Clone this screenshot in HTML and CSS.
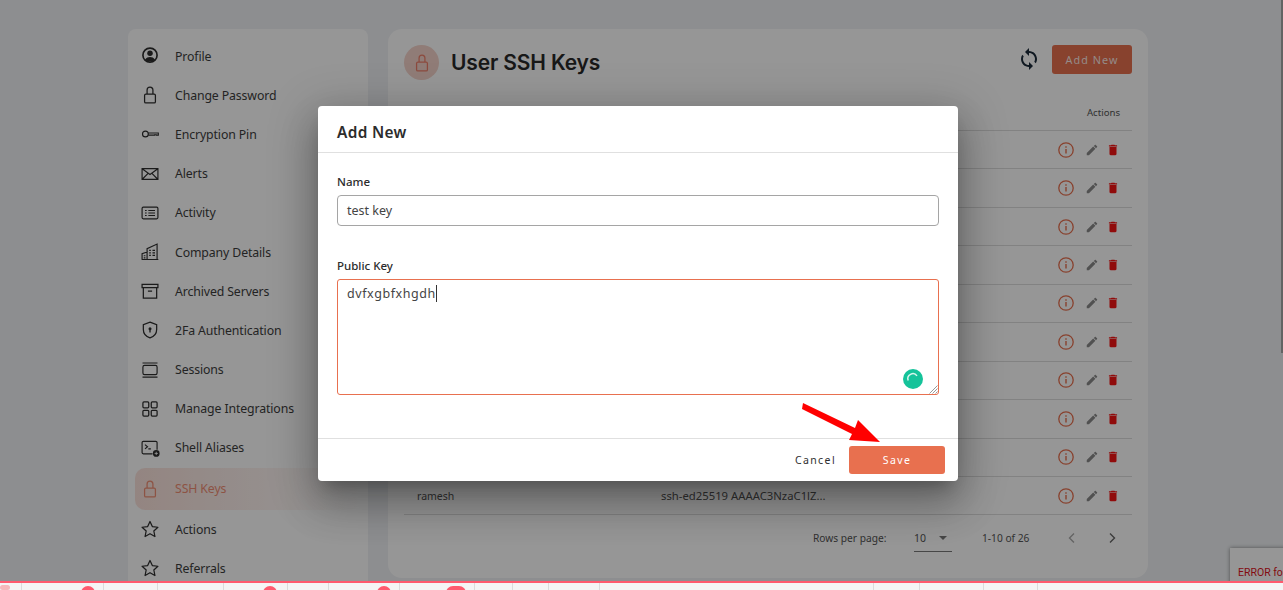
FILE: index.html
```html
<!DOCTYPE html>
<html lang="en">
<head>
<meta charset="utf-8">
<title>User SSH Keys</title>
<link rel="stylesheet" href="styles.css">
</head>
<body>
<svg class="sprite" aria-hidden="true">
  <symbol id="i-lock" viewBox="0 0 24 24"><path d="M7 11h10a1.500 1.500 0 0 1 1.500 1.500v7.500a1.500 1.500 0 0 1-1.500 1.500H7A1.500 1.500 0 0 1 5.500 20v-7.500A1.500 1.500 0 0 1 7 11zM8.500 11V6a3.500 3.500 0 0 1 7 0v5" fill="none" stroke="currentColor" stroke-width="1.500"/></symbol>
  <symbol id="i-info" viewBox="0 0 16 16"><circle cx="8" cy="8" r="7.200" fill="none" stroke="currentColor" stroke-width="1.300"/><path d="M7.300 7h1.400v4.500H7.300zM7.300 4.200h1.400v1.500H7.300z" fill="currentColor"/></symbol>
  <symbol id="i-edit" viewBox="0 0 24 24"><path fill="currentColor" d="M3 17.250V21h3.750L17.810 9.940l-3.750-3.750L3 17.250zM20.710 7.040c.39-.39.39-1.020 0-1.410l-2.340-2.340c-.39-.39-1.020-.39-1.410 0l-1.830 1.830 3.750 3.750 1.830-1.830z"/></symbol>
  <symbol id="i-trash" viewBox="0 0 24 24"><path fill="currentColor" d="M6 19c0 1.100.9 2 2 2h8c1.100 0 2-.9 2-2V7H6v12zM19 4h-3.500l-1-1h-5l-1 1H5v2h14V4z"/></symbol>
  <symbol id="i-star" viewBox="0 0 24 24"><path d="M12 3l2.800 6.100 6.700.8-4.900 4.500 1.300 6.600L12 17.700 6.100 21l1.300-6.600L2.500 9.900l6.700-.8z" fill="none" stroke="currentColor" stroke-width="1.500" stroke-linejoin="round"/></symbol>
</svg>

<div class="app">
  <div class="content">
    <nav class="sidebar">
      <a class="nav-item"><svg class="nav-icon" viewBox="0 0 24 24"><circle cx="12" cy="11" r="8.500" fill="none" stroke="currentColor" stroke-width="2"/><circle cx="12" cy="8.800" r="3.300" fill="currentColor"/><path d="M6 16.500c1.500-2.500 3.700-3.300 6-3.300s4.500.8 6 3.300a8.500 8.500 0 0 1-12 0z" fill="currentColor"/></svg><span>Profile</span></a>
      <a class="nav-item"><svg class="nav-icon"><use href="#i-lock"/></svg><span>Change Password</span></a>
      <a class="nav-item"><svg class="nav-icon" viewBox="0 0 24 24"><circle cx="6.500" cy="12" r="3.500" fill="none" stroke="currentColor" stroke-width="1.400"/><path d="M10 10.700h12v2.600h-2.500v-.5h-2v.5H10" fill="none" stroke="currentColor" stroke-width="1.300"/></svg><span>Encryption Pin</span></a>
      <a class="nav-item"><svg class="nav-icon" viewBox="0 0 24 24"><path d="M2.500 5.500h19v13h-19zM3 6l9 6.500L21 6M3 18l7-7M21 18l-7-7" fill="none" stroke="currentColor" stroke-width="1.400"/></svg><span>Alerts</span></a>
      <a class="nav-item"><svg class="nav-icon" viewBox="0 0 24 24"><rect x="2.500" y="5" width="19" height="14" rx="1.500" fill="none" stroke="currentColor" stroke-width="1.400"/><path d="M6 9h2M10 9h8M6 12h2M10 12h8M6 15h2M10 15h8" stroke="currentColor" stroke-width="1.300"/></svg><span>Activity</span></a>
      <a class="nav-item"><svg class="nav-icon" viewBox="0 0 24 24"><path d="M2.500 21v-7l6-2V21M8.500 21V8l12-5.500V21zM2 21h20M11 10h2M15 10h3M11 13h2M15 13h3M11 16h2M15 16h3M4.500 16.500h2M4.500 19h2" fill="none" stroke="currentColor" stroke-width="1.400"/></svg><span>Company Details</span></a>
      <a class="nav-item"><svg class="nav-icon" viewBox="0 0 24 24"><path d="M2.500 4h19v4h-19zM4 8v12.500h16V8M9.500 12h5" fill="none" stroke="currentColor" stroke-width="1.500"/></svg><span>Archived Servers</span></a>
      <a class="nav-item"><svg class="nav-icon" viewBox="0 0 24 24"><path d="M12 2.500l8 3v6c0 5-3.500 8.500-8 10-4.500-1.500-8-5-8-10v-6z" fill="none" stroke="currentColor" stroke-width="1.500"/><circle cx="12" cy="10.500" r="1.800" fill="currentColor"/><path d="M11.200 11h1.600v4h-1.600z" fill="currentColor"/></svg><span>2Fa Authentication</span></a>
      <a class="nav-item"><svg class="nav-icon" viewBox="0 0 24 24"><rect x="3.500" y="6.500" width="17" height="11" rx="2" fill="none" stroke="currentColor" stroke-width="1.400"/><path d="M3 3.500h18M3 20.500h18" stroke="currentColor" stroke-width="1.300"/></svg><span>Sessions</span></a>
      <a class="nav-item"><svg class="nav-icon" viewBox="0 0 24 24"><rect x="3.500" y="3.500" width="7" height="7" rx="1.200" fill="none" stroke="currentColor" stroke-width="1.500"/><rect x="13.500" y="3.500" width="7" height="7" rx="1.200" fill="none" stroke="currentColor" stroke-width="1.500"/><rect x="3.500" y="13.500" width="7" height="7" rx="1.200" fill="none" stroke="currentColor" stroke-width="1.500"/><rect x="13.500" y="13.500" width="7" height="7" rx="1.200" fill="none" stroke="currentColor" stroke-width="1.500"/></svg><span>Manage Integrations</span></a>
      <a class="nav-item"><svg class="nav-icon" viewBox="0 0 24 24"><path d="M15 19H4a1.500 1.500 0 0 1-1.500-1.500v-12A1.500 1.500 0 0 1 4 4h15a1.500 1.500 0 0 1 1.500 1.500V14M6 8l3 2.500L6 13M10 13h3" fill="none" stroke="currentColor" stroke-width="1.400"/><circle cx="19.500" cy="18.500" r="4" fill="currentColor"/><path d="M19.500 16.500v4M17.500 18.500h4" stroke="#fff" stroke-width="1"/></svg><span>Shell Aliases</span></a>
      <a class="nav-item active"><svg class="nav-icon"><use href="#i-lock"/></svg><span>SSH Keys</span></a>
      <a class="nav-item"><svg class="nav-icon"><use href="#i-star"/></svg><span>Actions</span></a>
      <a class="nav-item"><svg class="nav-icon"><use href="#i-star"/></svg><span>Referrals</span></a>
    </nav>

    <main class="panel">
      <header class="panel-head">
        <span class="avatar"><svg class="avatar-icon"><use href="#i-lock"/></svg></span>
        <h1 class="panel-title">User SSH Keys</h1>
        <svg class="sync" viewBox="0 0 24 24"><path fill="currentColor" d="M12 4V1L8 5l4 4V6c3.310 0 6 2.690 6 6 0 1.010-.25 1.970-.7 2.800l1.460 1.460C19.540 15.030 20 13.570 20 12c0-4.420-3.580-8-8-8zm0 14c-3.310 0-6-2.690-6-6 0-1.010.25-1.970.7-2.800L5.240 7.740C4.460 8.970 4 10.430 4 12c0 4.420 3.580 8 8 8v3l4-4-4-4v3z"/></svg>
        <button class="btn-add">Add New</button>
      </header>

      <div class="table">
        <div class="thead"><span>Name</span><span>Public Key</span><span class="th-actions">Actions</span></div>
        <div class="row"><span></span><span></span><span class="actions"><svg class="a-info"><use href="#i-info"/></svg><svg class="a-edit"><use href="#i-edit"/></svg><svg class="a-trash"><use href="#i-trash"/></svg></span></div>
        <div class="row"><span></span><span></span><span class="actions"><svg class="a-info"><use href="#i-info"/></svg><svg class="a-edit"><use href="#i-edit"/></svg><svg class="a-trash"><use href="#i-trash"/></svg></span></div>
        <div class="row"><span></span><span></span><span class="actions"><svg class="a-info"><use href="#i-info"/></svg><svg class="a-edit"><use href="#i-edit"/></svg><svg class="a-trash"><use href="#i-trash"/></svg></span></div>
        <div class="row"><span></span><span></span><span class="actions"><svg class="a-info"><use href="#i-info"/></svg><svg class="a-edit"><use href="#i-edit"/></svg><svg class="a-trash"><use href="#i-trash"/></svg></span></div>
        <div class="row"><span></span><span></span><span class="actions"><svg class="a-info"><use href="#i-info"/></svg><svg class="a-edit"><use href="#i-edit"/></svg><svg class="a-trash"><use href="#i-trash"/></svg></span></div>
        <div class="row"><span></span><span></span><span class="actions"><svg class="a-info"><use href="#i-info"/></svg><svg class="a-edit"><use href="#i-edit"/></svg><svg class="a-trash"><use href="#i-trash"/></svg></span></div>
        <div class="row"><span></span><span></span><span class="actions"><svg class="a-info"><use href="#i-info"/></svg><svg class="a-edit"><use href="#i-edit"/></svg><svg class="a-trash"><use href="#i-trash"/></svg></span></div>
        <div class="row"><span></span><span></span><span class="actions"><svg class="a-info"><use href="#i-info"/></svg><svg class="a-edit"><use href="#i-edit"/></svg><svg class="a-trash"><use href="#i-trash"/></svg></span></div>
        <div class="row"><span></span><span></span><span class="actions"><svg class="a-info"><use href="#i-info"/></svg><svg class="a-edit"><use href="#i-edit"/></svg><svg class="a-trash"><use href="#i-trash"/></svg></span></div>
        <div class="row"><span>ramesh</span><span class="key">ssh-ed25519 AAAAC3NzaC1lZ...</span><span class="actions"><svg class="a-info"><use href="#i-info"/></svg><svg class="a-edit"><use href="#i-edit"/></svg><svg class="a-trash"><use href="#i-trash"/></svg></span></div>
      </div>

      <footer class="pager">
        <span class="pager-label">Rows per page:</span>
        <span class="pager-select">10<i class="caret"></i></span>
        <span class="pager-count">1-10 of 26</span>
        <svg class="pager-prev" viewBox="0 0 12 12"><path d="M8 1.500L3.500 6 8 10.500" fill="none" stroke="currentColor" stroke-width="1.400"/></svg>
        <svg class="pager-next" viewBox="0 0 12 12"><path d="M4 1.500L8.500 6 4 10.500" fill="none" stroke="currentColor" stroke-width="1.400"/></svg>
      </footer>
    </main>
  </div>

  <div class="recaptcha">ERROR for site owner</div>
  <div class="scrollbar"></div>
  <div class="scrim"></div>

  <section class="modal">
    <h2 class="modal-title">Add New</h2>
    <div class="modal-body">
      <label class="field-label">Name</label>
      <div class="input">test key</div>
      <label class="field-label field-gap">Public Key</label>
      <div class="textarea">
        <span class="typed">dvfxgbfxhgdh</span>
        <span class="grammarly"><svg viewBox="0 0 20 20"><path d="M5.200 11.500a5 5 0 0 1 8.800-4.600" fill="none" stroke="#d8f5ec" stroke-width="1.500"/></svg></span>
        <svg class="resize" viewBox="0 0 10 10"><path d="M9.500 1.500l-8 8M9.500 4.500l-5 5M9.500 7.500l-2 2" stroke="#999" stroke-width="1"/></svg>
      </div>
    </div>
    <div class="modal-foot">
      <button class="btn-cancel">Cancel</button>
      <button class="btn-save">Save</button>
    </div>
  </section>

  <svg class="arrow" viewBox="0 0 90 44"><path d="M1 3L53 28 56 20 78 42 47 40 50 34 0 9z" fill="#ff0000"/></svg>
</div>

<div class="taskbar">
  <div class="tb-cell tb-first"><i class="tb-mark"></i></div>
  <div class="tb-cell"><i class="blob"></i></div>
  <div class="tb-cell"></div>
  <div class="tb-cell"></div>
  <div class="tb-cell"><i class="blob blob-b"></i></div>
  <div class="tb-cell"></div>
  <div class="tb-cell"><i class="blob"></i></div>
  <div class="tb-cell"><i class="blob blob-wide"></i></div>
  <div class="tb-cell"></div>
  <div class="tb-cell"></div>
  <div class="tb-cell"></div>
  <div class="tb-cell"></div>
  <div class="tb-cell"></div>
  <div class="tb-cell"></div>
  <div class="tb-cell"></div>
  <div class="tb-cell tb-last"></div>
</div>
</body>
</html>
```

FILE: styles.css
```css
* { box-sizing: border-box; }
html, body { margin: 0; height: 590px; overflow: hidden; }
body { font-family: "Noto Sans", "Open Sans", sans-serif; color: #333; background: #f3f4f6; }
.sprite { display: none; }

.app { position: relative; height: 581px; overflow: hidden; background: #f0f2f5; }
.content { display: flex; gap: 20px; padding: 29px 0 0 128px; align-items: flex-start; }

/* sidebar */
.sidebar { width: 240px; height: 580px; flex: none; background: #fff; border-radius: 8px 8px 0 0; padding: 7.500px 0 0 7px; }
.nav-item { display: flex; align-items: center; height: 39.200px; padding-left: 5px; font-size: 12.300px; letter-spacing: -.12px; color: #3d3d3d; }
.nav-item span { margin-left: 15px; }
.nav-icon { width: 20px; height: 20px; flex: none; color: #2e2e2e; }
.nav-item.active { height: 42px; width: 225px; border-radius: 10px; color: #f08e74; background: linear-gradient(90deg, rgba(232,112,79,.2), rgba(232,112,79,0)); }
.nav-item.active .nav-icon { color: #f08e74; }

/* panel */
.panel { width: 760px; height: 549px; flex: none; background: #fff; border-radius: 14px; padding: 16px; }
.panel-head { display: flex; align-items: center; height: 35px; }
.avatar { width: 35px; height: 35px; border-radius: 50%; background: #f5d3ca; display: flex; align-items: center; justify-content: center; flex: none; }
.avatar-icon { width: 20px; height: 20px; color: #ee7f6a; }
.panel-title { margin: 0 0 0 12px; font: 600 21px/1 Inter, "Noto Sans", sans-serif; letter-spacing: -.15px; color: #2a2a2a; }
.sync { width: 24px; height: 24px; margin-left: auto; margin-top: -8px; color: #1c2b3a; }
.btn-add { width: 80px; height: 29px; margin: -6px 0 0 11px; border: 0; border-radius: 3px; background: #e8704f; color: rgba(255,255,255,.88); font: 400 10.800px "Noto Sans", sans-serif; letter-spacing: 1.050px; }

.table { margin-top: 16px; }
.thead, .row { display: grid; grid-template-columns: 244px 1fr 120px; padding-left: 13px; }
.thead { height: 35px; align-items: center; border-bottom: 1px solid #dedede; font-size: 9.600px; color: #555; padding-bottom: 2px; }
.thead span:not(.th-actions) { visibility: hidden; }
.th-actions { text-align: right; padding-right: 12px; }
.row { height: 38.450px; align-items: center; border-bottom: 1px solid #dedede; font-size: 10.500px; color: #555; }
.key { font-size: 11.300px; white-space: nowrap; }
.actions { display: flex; align-items: center; justify-content: flex-end; padding-right: 12px; }
.a-info { width: 16px; height: 16px; color: #e8704f; }
.a-edit { width: 14px; height: 14px; margin-left: 11px; color: #8a8a8a; }
.a-trash { width: 14px; height: 14px; margin-left: 7px; color: #f51414; }

.pager { display: flex; align-items: center; height: 46px; font-size: 10.200px; color: #555; }
.pager-label { margin-left: 409px; width: 101px; }
.pager-select { position: relative; width: 38px; height: 28px; padding-top: 7px; border-bottom: 1px solid #777; font-size: 10.500px; }
.caret { position: absolute; right: 5px; top: 12px; border: 4px solid transparent; border-top-color: #777; border-bottom: 0; }
.pager-count { margin-left: 30px; width: 78px; }
.pager-prev { width: 12px; height: 12px; margin-left: 6px; color: #aaa; }
.pager-next { width: 12px; height: 12px; margin-left: 28px; color: #666; }

/* over-page layers */
.recaptcha { position: absolute; left: 1230px; top: 548px; width: 60px; height: 40px; padding: 18px 0 0 8px; background: #fff; box-shadow: 0 0 4px rgba(0,0,0,.45); font: 10.500px/14px Roboto, sans-serif; color: #e0141c; white-space: nowrap; overflow: hidden; }
.scrollbar { position: absolute; right: 0; top: 0; width: 2px; height: 353px; background: #a8a8a8; }
.scrim { position: absolute; inset: 0; background: rgba(0,0,0,.41); }

/* modal */
.modal { position: absolute; left: 318px; top: 106px; width: 640px; height: 375px; background: #fff; border-radius: 4px; display: flex; flex-direction: column; box-shadow: 0 11px 15px -7px rgba(0,0,0,.22), 0 24px 38px 3px rgba(0,0,0,.2), 0 9px 46px 8px rgba(0,0,0,.18); }
.modal-title { margin: 0; height: 47px; padding: 16px 0 0 19px; border-bottom: 1px solid #e0e0e0; font: 600 15.400px/22px "Noto Sans", sans-serif; letter-spacing: .35px; color: #2c2c2c; }
.modal-body { flex: 1; padding: 21px 19px 0; }
.field-label { display: block; font-size: 11.500px; line-height: 16px; font-weight: 500; color: #2c2c2c; margin-bottom: 5px; }
.field-gap { margin-top: 32px; }
.input { height: 31px; border: 1px solid #a5a5a5; border-radius: 4px; padding-left: 9px; font-size: 12.500px; line-height: 29px; color: #444; }
.textarea { position: relative; height: 116px; border: 1px solid #e8704f; border-radius: 3px; padding: 5px 9px; font-size: 12.500px; line-height: 17px; color: #444; }
.typed { border-right: 1px solid #333; padding-right: .5px; letter-spacing: .55px; }
.grammarly { position: absolute; right: 15px; bottom: 5px; width: 20px; height: 20px; border-radius: 50%; background: #15c39a; }
.grammarly svg { display: block; width: 20px; height: 20px; }
.resize { position: absolute; right: 0; bottom: 0; width: 10px; height: 10px; }
.modal-foot { height: 43px; border-top: 1px solid #e0e0e0; display: flex; align-items: flex-start; justify-content: flex-end; padding: 7px 13px 0 0; }
.btn-cancel { margin: 0 13px 0 0; height: 28px; border: 0; background: none; padding: 0; font: 400 10.500px "Noto Sans", sans-serif; letter-spacing: 1.400px; color: #2f2f2f; }
.btn-save { width: 96px; height: 28px; border: 0; border-radius: 3px; background: #e8704f; color: #fff; font: 400 10.500px "Noto Sans", sans-serif; letter-spacing: 1.400px; }
.arrow { position: absolute; left: 802px; top: 400px; width: 90px; height: 44px; }

/* bottom bar */
.taskbar { height: 9px; border-top: 2px solid #ff5a6e; background: #f5f5f5; display: grid; grid-template-columns: 22px 82px 54px 66px 64px 41px 71px 75px 38px 36px 51px 274px 46px 64px 54px 1fr; overflow: hidden; }
.tb-cell { position: relative; display: flex; justify-content: flex-end; padding-right: 8px; border-right: 1px solid #dcdcdc; overflow: hidden; }
.tb-last { border-right: 0; }
.blob { width: 14px; height: 14px; margin-top: 3px; border-radius: 50%; background: #ff5a6e; }
.blob-b { margin-right: 2px; }
.blob-wide { width: 20px; border-radius: 8px; }
.tb-mark { position: absolute; left: 0; top: 2px; width: 10px; height: 5px; background: #f6b8bb; border-radius: 3px; }
```
